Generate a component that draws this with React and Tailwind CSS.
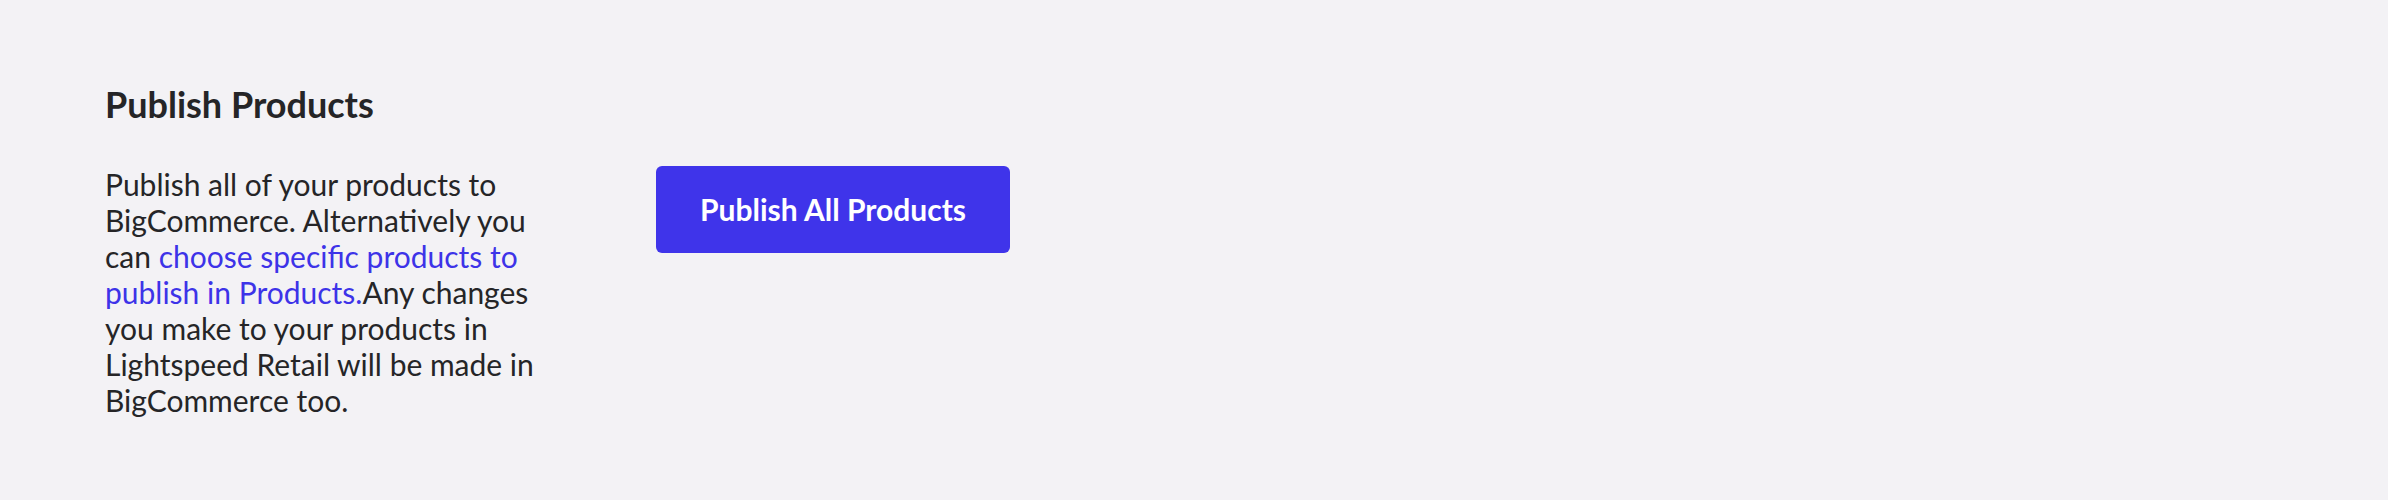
export default function App() {
  return (
    <div
      className="w-full h-[500px] bg-[#f3f2f5] pl-[105px] pt-[83px] text-[#252527]"
      style={{ fontFamily: "Lato, 'Noto Sans', sans-serif" }}
    >
      <h2 className="text-[36px] leading-[43px] font-bold">Publish Products</h2>
      <div className="flex items-start mt-[40px]">
        <p className="w-[436px] text-[30px] leading-[36px]">
          Publish all of your products to BigCommerce. Alternatively you can{" "}
          <a className="text-[#3d33e8]" href="#">
            choose specific products to publish in Products.
          </a>
          Any changes you make to your products in Lightspeed Retail will be made in BigCommerce too.
        </p>
        <button className="ml-[115px] w-[354px] h-[87px] rounded-[6px] bg-[#3f34ea] text-white text-[30px] font-bold flex items-center justify-center">
          Publish All Products
        </button>
      </div>
    </div>
  );
}
